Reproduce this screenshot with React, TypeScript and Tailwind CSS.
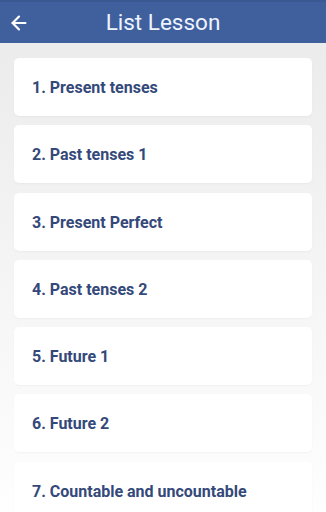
import { ArrowLeft } from 'lucide-react'

const lessons = [
  '1. Present tenses',
  '2. Past tenses 1',
  '3. Present Perfect',
  '4. Past tenses 2',
  '5. Future 1',
  '6. Future 2',
  '7. Countable and uncountable',
]

const App = () => {
  return <div className="w-full h-screen overflow-hidden flex flex-col bg-gradient-to-b from-[#eaeaea] to-[#fefefe]" style={{ fontFamily: 'Roboto, "Noto Sans", sans-serif' }}>
    {/* header */}
    <div className="h-[43px] shrink-0 bg-[#40609d] border-t-2 border-[#3a5891] relative flex items-center justify-center">
      <ArrowLeft className="absolute left-[8px] top-[10px] text-white" size={22} strokeWidth={2.4} />
      <span className="text-[22.5px] text-[#eef3ff] leading-none">List Lesson</span>
    </div>

    {/* lessons */}
    <div className="flex flex-col gap-[9.3px] px-[14px] pt-[15px]">
      {lessons.map((item, index) => (
        <div key={index} className="h-[58px] shrink-0 bg-white rounded-[5px] shadow-[0_1px_2px_rgba(0,0,0,0.04)] flex items-center pl-[18px] pt-[2px]">
          <span className="text-[16px] font-bold text-[#34497a]">{item}</span>
        </div>
      ))}
    </div>
  </div>
}

export default App
